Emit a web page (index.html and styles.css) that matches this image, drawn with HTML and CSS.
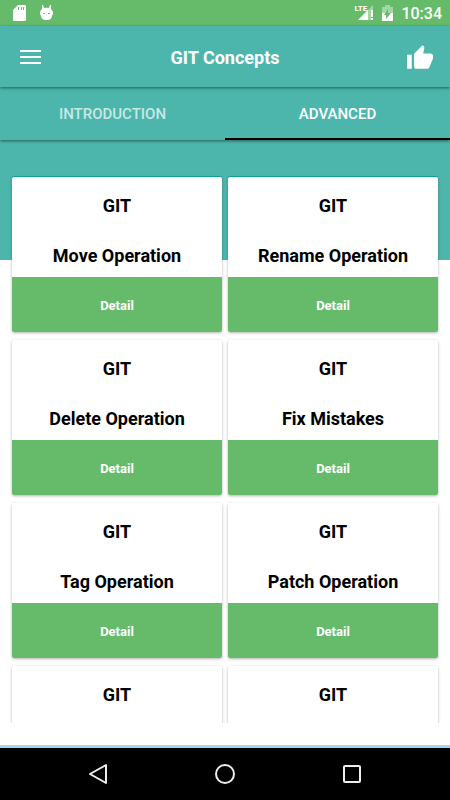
FILE: index.html
```html
<!DOCTYPE html>
<html lang="en">
<head>
<meta charset="utf-8">
<meta name="viewport" content="width=device-width, initial-scale=1">
<title>GIT Concepts</title>
<link rel="stylesheet" href="styles.css">
</head>
<body>
<div class="status">
  <div class="status-group">
    <svg width="14" height="17" viewBox="0 0 14 17"><path fill="#fff" fill-rule="evenodd" d="M5 0h7q1 0 1 1v14q0 1-1 1H1q-1 0-1-1V5zM5 2v3h1V2zM8 2v3h1V2zM10 2v3h1V2z"/></svg>
    <svg width="13" height="17" viewBox="0 0 13 17"><path fill="#fff" fill-rule="evenodd" d="M2 0h1l1 3q2.500-.7 5 0l1-3h1v4q1 .5 1 1.500l1 1v3l-1 1q0 4.500-5.500 4.500T1 10.500l-1-1v-3l1-1Q1 4.500 2 4zM3 8v1h2V8zM8 8v1h2V8z"/></svg>
  </div>
  <div class="status-group status-right">
    <span class="signal"><span class="lte">LTE</span><svg width="16" height="16" viewBox="0 0 16 16"><path fill="#a3d5a5" d="M15 0v5h-2v10H0z"/><path fill="#fff" d="M10 5v10H0zM13 5h2v7h-2zM13 13h2v2h-2z"/></svg></span>
    <svg class="battery" width="11" height="16" viewBox="0 0 11 16"><path fill="#a3d5a5" d="M3 0h5v2h3v6H0V2h3z"/><path fill="#fff" d="M0 8h11v8H0z"/><path fill="#66bb6a" d="M6 4v4h3l-5 6v-4H2z"/></svg>
    <span class="time">10:34</span>
  </div>
</div>
<header class="bar">
  <button class="icon-button" aria-label="Menu"><svg width="21" height="16" viewBox="0 0 21 16"><path fill="#fff" d="M0 1h21v2H0zM0 7h21v2H0zM0 13h21v2H0z"/></svg></button>
  <h1>GIT Concepts</h1>
  <button class="icon-button" aria-label="Like"><svg width="26" height="24" viewBox="1 1 22 20"><path fill="#fff" d="M1 21h4V9H1v12zm22-11c0-1.100-.9-2-2-2h-6.310l.95-4.570.03-.32c0-.41-.17-.79-.44-1.060L14.170 1 7.590 7.590C7.220 7.950 7 8.450 7 9v10c0 1.100.9 2 2 2h9c.83 0 1.540-.5 1.840-1.220l3.020-7.050c.09-.23.14-.47.14-.73v-2z"/></svg></button>
</header>
<nav class="tabs">
  <a href="#introduction">INTRODUCTION</a>
  <a href="#advanced" class="active" aria-current="page">ADVANCED</a>
</nav>
<main>
  <div class="list">
    <article class="card"><h2>GIT</h2><h3>Move Operation</h3><button>Detail</button></article>
    <article class="card"><h2>GIT</h2><h3>Rename Operation</h3><button>Detail</button></article>
    <article class="card"><h2>GIT</h2><h3>Delete Operation</h3><button>Detail</button></article>
    <article class="card"><h2>GIT</h2><h3>Fix Mistakes</h3><button>Detail</button></article>
    <article class="card"><h2>GIT</h2><h3>Tag Operation</h3><button>Detail</button></article>
    <article class="card"><h2>GIT</h2><h3>Patch Operation</h3><button>Detail</button></article>
    <article class="card last"><h2>GIT</h2></article>
    <article class="card last"><h2>GIT</h2></article>
  </div>
</main>
<footer class="system-nav">
  <button aria-label="Back"><svg width="20" height="22" viewBox="0 0 20 22"><path d="M18 2v18L2 11z"/></svg></button>
  <button aria-label="Home"><svg width="22" height="22" viewBox="0 0 22 22"><circle cx="11" cy="11" r="9"/></svg></button>
  <button aria-label="Recent apps"><svg width="20" height="20" viewBox="0 0 20 20"><rect x="2" y="2" width="16" height="16" rx="1"/></svg></button>
</footer>
</body>
</html>
```
FILE: styles.css
```css
* { box-sizing: border-box; }
body {
  margin: 0;
  height: 100vh;
  display: flex;
  flex-direction: column;
  font-family: Roboto, "Liberation Sans", sans-serif;
  background: #fff;
}
svg { display: block; }
h1, h2, h3 { margin: 0; font-size: 18px; line-height: 22px; font-weight: 700; text-align: center; }
button { border: 0; padding: 0; background: none; font-family: inherit; }

.status {
  flex: none;
  height: 26px;
  padding: 0 8px 0 13px;
  display: flex;
  justify-content: space-between;
  align-items: center;
  background: #66bb6a;
  color: #fff;
}
.status-group { display: flex; align-items: center; gap: 13px; }
.status-right { gap: 8px; }
.signal { position: relative; padding-left: 4px; }
.lte { position: absolute; left: 0; top: 0; font-size: 8px; line-height: 8px; font-weight: 700; font-family: "Liberation Sans Narrow", Roboto, sans-serif; }
.time { font-size: 16px; line-height: 26px; padding-top: 2px; font-weight: 500; }

.bar {
  position: relative;
  z-index: 2;
  flex: none;
  height: 61px;
  padding: 0 17px 0 20px;
  display: grid;
  grid-template-columns: 26px 1fr 26px;
  align-items: center;
  background: #4db6ac;
  color: #fff;
  box-shadow: 0 1px 3px rgba(0, 0, 0, 0.5);
}
.bar h1 { padding: 2px 3px 0 0; }

.tabs {
  position: relative;
  z-index: 1;
  flex: none;
  height: 53px;
  display: flex;
  background: #4db6ac;
  box-shadow: 0 1px 3px rgba(0, 0, 0, 0.5);
}
.tabs a {
  flex: 1;
  padding-top: 3px;
  border-bottom: 2px solid transparent;
  color: rgba(255, 255, 255, 0.7);
  font-size: 15px;
  line-height: 48px;
  font-weight: 500;
  text-align: center;
  text-decoration: none;
}
.tabs .active { color: #fff; border-color: #000; }

main {
  flex: 1;
  min-height: 0;
  display: flex;
  padding-bottom: 22px;
  background: linear-gradient(#4db6ac, #4db6ac) top / 100% 120px no-repeat;
}
.list {
  flex: 1;
  overflow: hidden;
  padding: 37px 12px 0;
  display: grid;
  grid-template-columns: 1fr 1fr;
  grid-auto-rows: max-content;
  gap: 8px 6px;
}
.card {
  padding-top: 18px;
  border-radius: 2px;
  background: #fff;
  box-shadow: 0 1px 3px rgba(0, 0, 0, 0.3);
}
.card:nth-child(-n + 2) { box-shadow: 0 -1px 0 #0aa195, 0 1px 3px rgba(0, 0, 0, 0.3); }
.card h3 { margin: 28px 0 10px; }
.card button {
  display: block;
  width: 100%;
  height: 55px;
  padding-top: 1px;
  border-radius: 0 0 2px 2px;
  background: #66bb6a;
  color: #fff;
  font-size: 13px;
  font-weight: 700;
}
.last { height: 155px; }

.system-nav {
  flex: none;
  height: 55px;
  padding: 0 35px;
  display: grid;
  grid-template-columns: repeat(3, 1fr);
  place-items: center;
  border-top: 3px solid #a9d3f0;
  background: #000;
}
.system-nav svg { fill: none; stroke: #eee; stroke-width: 2; stroke-linejoin: round; }
```
